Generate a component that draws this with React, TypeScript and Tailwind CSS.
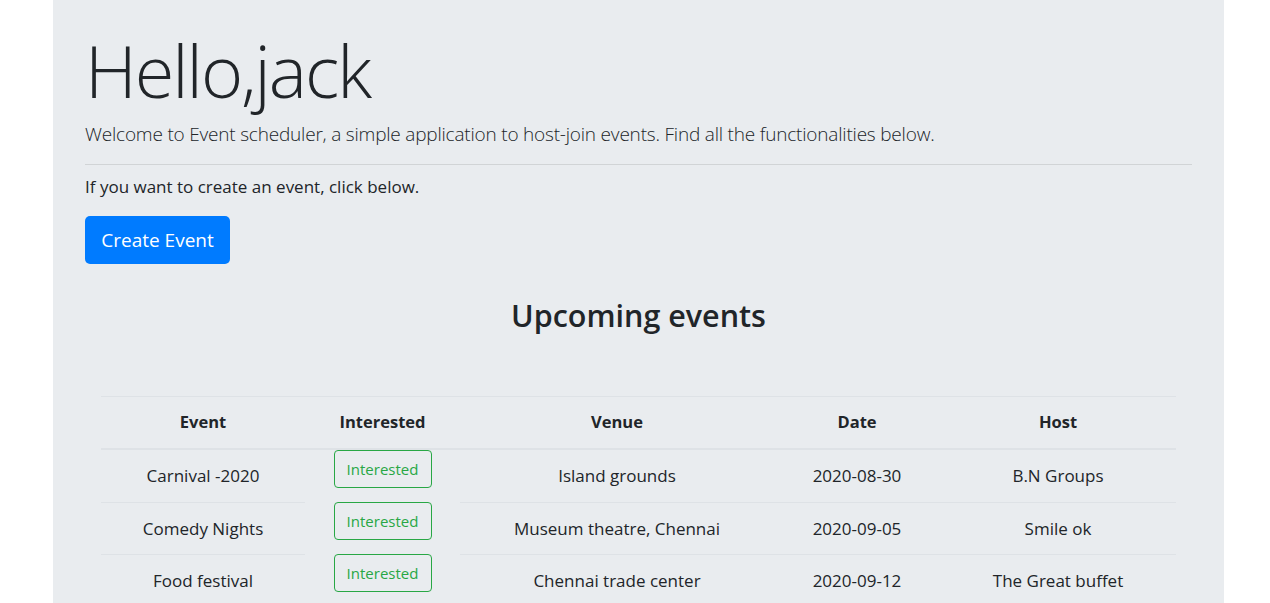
const events = [
  { name: "Carnival -2020", venue: "Island grounds", date: "2020-08-30", host: "B.N Groups" },
  { name: "Comedy Nights", venue: "Museum theatre, Chennai", date: "2020-09-05", host: "Smile ok" },
  { name: "Food festival", venue: "Chennai trade center", date: "2020-09-12", host: "The Great buffet" },
];

const cols = "grid grid-cols-[204px_155px_314px_166px_236px]";

export default function App() {
  return (
    <div className="min-h-screen bg-white font-['Open_Sans',sans-serif] text-[#212529]">
      <div className="ml-[53px] min-h-[603px] w-[1171px] bg-[#e9ecef] px-8 pt-[27px]">
        <h1 className="text-[72px] font-light leading-[1.2] tracking-[-2px]">Hello,jack</h1>
        <p className="mt-[6px] text-[19px] font-light leading-[30px] tracking-[-0.2px]">
          Welcome to Event scheduler, a simple application to host-join events. Find all the functionalities below.
        </p>
        <hr className="mt-[15px] border-t border-black/10" />
        <p className="mt-[10px] text-[17px] leading-6">If you want to create an event, click below.</p>
        <button className="mt-[17px] h-[48px] w-[145px] rounded-[5px] bg-[#007bff] text-[19px] text-white">
          Create Event
        </button>
        <h2 className="mt-[33px] text-center text-[30.5px] font-semibold leading-[1.2]">Upcoming events</h2>

        {/* Events table */}
        <div className="mx-4 mt-[62px] text-center text-[17px]">
          <div className={`${cols} h-[54px] border-t border-b-2 border-[#dee2e6] text-[16.5px] font-bold`}>
            {["Event", "Interested", "Venue", "Date", "Host"].map((h) => (
              <div key={h} className="flex items-center justify-center">
                {h}
              </div>
            ))}
          </div>
          {events.map((e, i) => {
            const line = i > 0 ? "border-t border-[#dee2e6]" : "";
            return (
              <div key={e.name} className={`${cols} h-[52px]`}>
                <div className={`flex items-center justify-center ${line}`}>{e.name}</div>
                <div className="flex items-start justify-center">
                  <button className="h-[38px] w-[98px] rounded-[4px] border border-[#28a745] text-[15px] text-[#28a745]">
                    Interested
                  </button>
                </div>
                <div className={`flex items-center justify-center ${line}`}>{e.venue}</div>
                <div className={`flex items-center justify-center ${line}`}>{e.date}</div>
                <div className={`flex items-center justify-center ${line}`}>{e.host}</div>
              </div>
            );
          })}
        </div>
      </div>
    </div>
  );
}
